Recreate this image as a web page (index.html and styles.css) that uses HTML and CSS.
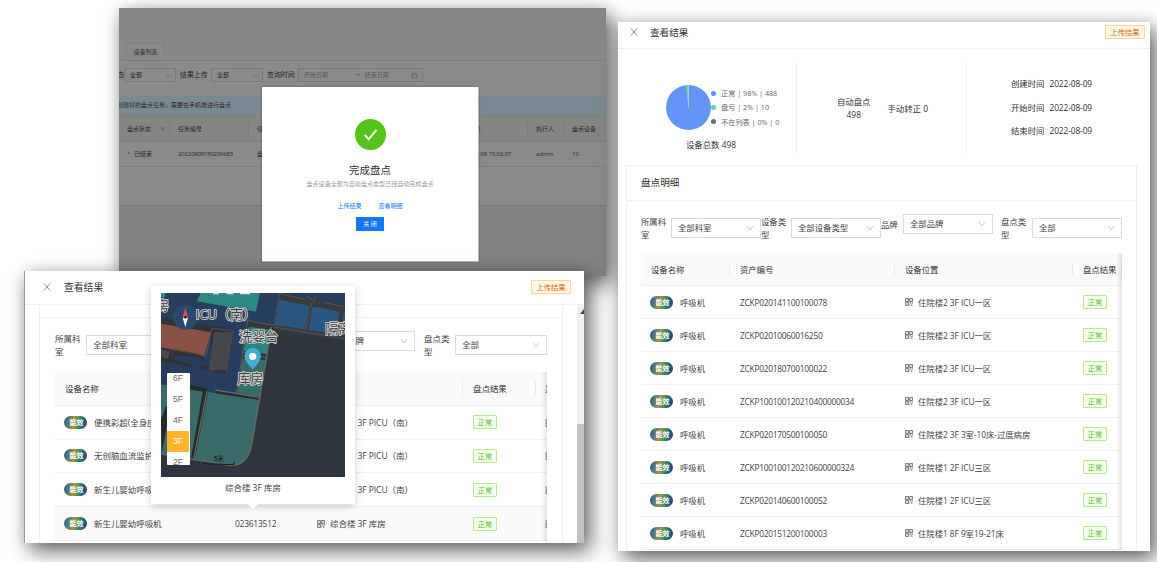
FILE: index.html
```html
<!DOCTYPE html>
<html lang="zh-CN">
<head>
<meta charset="utf-8">
<title>盘点结果</title>
<link rel="stylesheet" href="styles.css">
</head>
<body>
<svg class="defs" width="0" height="0">
  <symbol id="close" viewBox="0 0 8 8"><path d="M.8.4 7.2 7.6M7.2.4.8 7.6" fill="none" stroke="#777" stroke-width=".8"/></symbol>
  <symbol id="down" viewBox="0 0 8 8"><path d="M1 2 4 6 7 2" fill="none" stroke="currentColor" stroke-width=".8"/></symbol>
  <symbol id="qr" viewBox="0 0 8 8"><path d="M.5.5h3v3h-3zM4.6.5h2.9v3H4.6zM.5 4.6h3v2.9h-3zM1.5 2h1M5.5 2h1M1.5 6h1M4.5 4.7h1.3v1.2M7.4 4.4v1.4M4.6 7.4V6.5M6.2 7.4h1.3M6 6.3h.8" fill="none" stroke="#555" stroke-width=".75"/></symbol>
</svg>
<main class="canvas">

<section class="window tasks">
  <div class="tabs"><div class="tab">设备列表</div></div>
  <div class="query">
    <span class="cut">态</span>
    <div class="pick">全部<svg><use href="#down"/></svg></div>
    <span class="q-label">结果上传</span>
    <div class="pick">全部<svg><use href="#down"/></svg></div>
    <span class="q-label">查询时间</span>
    <div class="range"><span>开始日期</span><i>→</i><span>结束日期</span>
      <svg viewBox="0 0 8 8"><path d="M1 1.8h6v5H1zM1 3.6h6M2.6.8v1.6M5.4.8v1.6" fill="none" stroke="currentColor" stroke-width=".7"/></svg></div>
  </div>
  <div class="notice"><span>创建好的盘点任务，需要在手机端进行盘点</span></div>
  <div class="t-row t-head">
    <span class="status">盘点状态 <svg viewBox="0 0 6 6"><path d="M.5.7h5L3.7 3v2.4H2.3V3z" fill="#666"/></svg></span>
    <span>任务编号</span><span>任务名称</span><span class="end">时间</span><span>执行人</span><span>盘点设备</span>
  </div>
  <div class="t-row t-body">
    <span><i class="dot"></i>已结束</span><span class="num">20220809150236683</span><span>盘点任务</span><span class="end time">2022-08-09 15:02:37</span><span>admin</span><span>10</span>
  </div>
  <div class="t-pad"></div>
  <div class="dialog">
    <svg class="ok" viewBox="0 0 31 31"><circle cx="15.5" cy="15.5" r="15.5" fill="#52c41a"/><path d="M9.7 15.8 13.7 20.2 21.5 10.8" fill="none" stroke="#fff" stroke-width="2"/></svg>
    <h3>完成盘点</h3>
    <p>盘点设备全部为自动盘点类型已经自动完成盘点</p>
    <div class="links"><a>上传结果</a><a>查看明细</a></div>
    <button>关 闭</button>
  </div>
</section>

<section class="window result">
  <header class="head"><svg class="x"><use href="#close"/></svg><h2>查看结果</h2><span class="upload">上传结果</span></header>
  <div class="stats">
    <div class="chart">
      <div class="chart-row">
        <svg class="pie" viewBox="0 0 45 45"><circle cx="22.5" cy="22.5" r="22.5" fill="#6395f9"/><path d="M22.5 22.5 19.7.2A22.5 22.5 0 0 1 22.5 0z" fill="#62daab"/><path d="M22.5 22.5V0" stroke="#dbe7fb" stroke-width=".5"/></svg>
        <ul class="legend"><li class="c1">正常 | 98% | 488</li><li class="c2">盘亏 | 2% | 10</li><li class="c3">不在列表 | 0% | 0</li></ul>
      </div>
      <div class="total">设备总数 498</div>
    </div>
    <div class="counts"><div class="auto">自动盘点<br>498</div><div>手动转正 0</div></div>
    <div class="dates">
      <div><span>创建时间</span><b>2022-08-09</b></div>
      <div><span>开始时间</span><b>2022-08-09</b></div>
      <div><span>结束时间</span><b>2022-08-09</b></div>
    </div>
  </div>
  <div class="card">
    <h2 class="card-title">盘点明细</h2>
    <div class="filters">
      <label>所属科室</label><div class="select">全部科室<svg><use href="#down"/></svg></div>
      <label>设备类型</label><div class="select">全部设备类型<svg><use href="#down"/></svg></div>
      <label class="brand">品牌</label><div class="select up">全部品牌<svg><use href="#down"/></svg></div>
      <label class="kind">盘点类型</label><div class="select">全部<svg><use href="#down"/></svg></div>
    </div>
    <div class="table">
      <div class="row th"><span>设备名称</span><span>资产编号</span><span>设备位置</span><span>盘点结果</span></div>
      <div class="row"><span><em class="badge">能效</em>呼吸机</span><span class="code">ZCKP020141100100078</span><span><svg class="qr"><use href="#qr"/></svg>住院楼2 3F ICU一区</span><span><b class="tag">正常</b></span></div>
      <div class="row"><span><em class="badge">能效</em>呼吸机</span><span class="code">ZCKP02010060016250</span><span><svg class="qr"><use href="#qr"/></svg>住院楼2 3F ICU一区</span><span><b class="tag">正常</b></span></div>
      <div class="row"><span><em class="badge">能效</em>呼吸机</span><span class="code">ZCKP020180700100022</span><span><svg class="qr"><use href="#qr"/></svg>住院楼2 3F ICU一区</span><span><b class="tag">正常</b></span></div>
      <div class="row"><span><em class="badge">能效</em>呼吸机</span><span class="code">ZCKP100100120210400000034</span><span><svg class="qr"><use href="#qr"/></svg>住院楼2 3F ICU一区</span><span><b class="tag">正常</b></span></div>
      <div class="row"><span><em class="badge">能效</em>呼吸机</span><span class="code">ZCKP020170500100050</span><span><svg class="qr"><use href="#qr"/></svg>住院楼2 3F 3室-10床-过度病房</span><span><b class="tag">正常</b></span></div>
      <div class="row"><span><em class="badge">能效</em>呼吸机</span><span class="code">ZCKP100100120210600000324</span><span><svg class="qr"><use href="#qr"/></svg>住院楼1 2F ICU三区</span><span><b class="tag">正常</b></span></div>
      <div class="row"><span><em class="badge">能效</em>呼吸机</span><span class="code">ZCKP020140600100052</span><span><svg class="qr"><use href="#qr"/></svg>住院楼1 2F ICU三区</span><span><b class="tag">正常</b></span></div>
      <div class="row"><span><em class="badge">能效</em>呼吸机</span><span class="code">ZCKP020151200100003</span><span><svg class="qr"><use href="#qr"/></svg>住院楼1 8F 9室19-21床</span><span><b class="tag">正常</b></span></div>
    </div>
  </div>
</section>

<section class="window locate">
  <header class="head"><svg class="x"><use href="#close"/></svg><h2>查看结果</h2><span class="upload">上传结果</span></header>
  <div class="scroller">
    <div class="card">
      <div class="card-title"></div>
      <div class="filters">
        <label>所属科室</label><div class="select">全部科室<svg><use href="#down"/></svg></div>
        <label>设备类型</label><div class="select">全部设备类型<svg><use href="#down"/></svg></div>
        <label class="brand">品牌</label><div class="select up">全部品牌<svg><use href="#down"/></svg></div>
        <label class="kind">盘点类型</label><div class="select">全部<svg><use href="#down"/></svg></div>
      </div>
      <div class="table">
        <div class="row th"><span>设备名称</span><span>资产编号</span><span>设备位置</span><span>盘点结果</span><span>是</span></div>
        <div class="row"><span><em class="badge">能效</em>便携彩超(全身应用)</span><span class="code">023613509</span><span><svg class="qr"><use href="#qr"/></svg>综合楼 3F PICU（南）</span><span><b class="tag">正常</b></span><span>图</span></div>
        <div class="row"><span><em class="badge">能效</em>无创脑血流监护仪</span><span class="code">023613510</span><span><svg class="qr"><use href="#qr"/></svg>综合楼 3F PICU（南）</span><span><b class="tag">正常</b></span><span>图</span></div>
        <div class="row"><span><em class="badge">能效</em>新生儿婴幼呼吸机</span><span class="code">023613511</span><span><svg class="qr"><use href="#qr"/></svg>综合楼 3F PICU（南）</span><span><b class="tag">正常</b></span><span>图</span></div>
        <div class="row active"><span><em class="badge">能效</em>新生儿婴幼呼吸机</span><span class="code">023613512</span><span><svg class="qr"><use href="#qr"/></svg>综合楼 3F 库房</span><span><b class="tag">正常</b></span><span>图</span></div>
      </div>
    </div>
    <div class="bar"><svg viewBox="0 0 7 8"><path d="M3 6 7 1V6z" fill="#444"/></svg><i></i></div>
  </div>
  <div class="pop">
    <div class="map">
      <svg viewBox="33 40 552 552" width="184" height="184">
        <rect x="33" y="40" width="552" height="552" fill="#263d5d"/>
        <path d="M365 140 585 175V592H33V520L240 555 300 520Z" fill="#2f353e"/>
        <path d="M33 40h14l-4 16-10-3zM152 40 140 65 318 96 330 40Z" fill="#2d8983"/>
        <path d="M189 40h18M230 40h20M270 40h30" stroke="#dfe6e6" stroke-width="8"/>
        <path d="M33 114 250 149V160L232 283 208 279 170 272 152 268 154 256 180 260 184 158 33 132Z" fill="#303235"/>
        <path d="M33 132 183 158 160 237 33 206Z" fill="#8b5145"/>
        <path d="M192 158 247 157 229 270 176 273Z" fill="#47484b"/>
        <path d="M186 146 166 238M249 153 229 280M186 146 249 153" stroke="#505154" stroke-width="3" fill="none"/>
        <path d="M33 203 137 221 165 232 162 240 125 232 75 225 68 240 125 255 120 263 60 248 33 246Z" fill="#303235"/>
        <path d="M33 210 60 215 54 237 33 232Z" fill="#4a4b4e"/>
        <path d="M33 203 72 211 65 235M72 211 140 223" stroke="#505154" stroke-width="2" fill="none"/>
        <path d="M387 40 585 78V184L370 150Z" fill="#393a3c"/>
        <path d="M388 60 478 78 466 149 374 137ZM488 80 568 96 556 162 475 151ZM580 100h5v62h-10z" fill="#2b5681"/>
        <path d="M388 42 465 59M468 50 488 60M496 48 491 68M518 67 585 82M372 139 388 44M468 151 485 70M372 142 585 177" stroke="#525254" stroke-width="3" fill="none"/>
        <path d="M291 122 370 137 312 500 300 500 325 360 257 342Z" fill="#343739"/>
        <path d="M297 142 362 150 350 223 280 214Z" fill="#2a847f"/>
        <path d="M277 237 350 241 328 352 262 340Z" fill="#376b67"/>
        <path d="M291 122 370 137M293 124 259 340M275 217 350 234" stroke="#57595a" stroke-width="3" fill="none"/>
        <path d="M172 336 328 360 304 495Q294 562 234 557L130 540Z" fill="#3b6b68"/>
        <path d="M33 314 162 334 126 538 33 522Z" fill="#3b6b68"/>
        <path d="M48 380 62 382 35 520 33 420Z" fill="#232829"/>
        <path d="M160 328 174 338 134 540 123 536ZM198 331 329 352V361L196 340ZM120 317 172 326 170 337 120 330Z" fill="#282b2c"/>
        <path d="M365 142 307 485Q296 562 236 557L33 523M171 335 131 539M196 331 329 353" stroke="#646767" stroke-width="4" fill="none"/>
        <path d="M163 547v5l89 3v-8" stroke="#151a1a" stroke-width="3" fill="none"/>
        <circle cx="106" cy="113" r="37" fill="#2a496c"/>
        <path d="M106 84 114 112H98Z" fill="#e64b4f"/><path d="M98 114h16l-8 28Z" fill="#fff"/><circle cx="106" cy="113" r="4" fill="#222"/>
        <g class="labels"><text x="18" y="92">房</text><text x="137" y="118">ICU（南）</text><text x="267" y="184">洗婴台</text><text x="262" y="311">库房</text><text x="526" y="159">隔离</text></g>
        <path d="M308 270Q283 243 283 230A25 25 0 0 1 333 230Q333 243 308 270Z" fill="#43adcf"/><circle cx="308" cy="230" r="11" fill="#fff"/>
        <text class="scale" x="191" y="544">5米</text>
      </svg>
      <div class="floors"><span>6F</span><span>5F</span><span>4F</span><span class="on">3F</span><span>2F</span></div>
    </div>
    <div class="caption">综合楼 3F 库房</div>
  </div>
</section>
</main>
</body>
</html>
```
FILE: styles.css
```css
* { box-sizing: border-box; margin: 0; padding: 0; }
body { width: 1157px; height: 562px; overflow: hidden; background: #fff; font-family: "Open Sans", "Noto Sans CJK SC", sans-serif; color: #444; }
i, em { font-style: normal; }
.defs { position: absolute; }
.canvas { position: relative; width: 1157px; height: 562px; overflow: hidden; }
.window { position: absolute; background: #fff; box-shadow: 6px 8px 20px rgba(0,0,0,.6), 0 0 14px rgba(0,0,0,.1); }

/* Task list behind its mask */
.tasks { left: 119px; top: 8px; width: 487px; height: 268px; background: #838383; font-size: 6px; line-height: 8px; color: #2b2b2b; }
.tabs { height: 53px; padding: 35px 0 0 7px; background: #868786; border-bottom: 1px solid #7c7c7c; }
.tab { width: 39px; height: 17px; background: #898989; border: 1px solid #7f7f7f; border-bottom: 0; text-align: center; line-height: 17px; }
.query { height: 35px; padding: 7px 0 0; display: flex; align-items: flex-start; background: #8a8a8a; line-height: 14px; }
.cut { width: 5px; height: 14px; font-size: 7px; direction: rtl; overflow: hidden; }
.pick { width: 52px; height: 14px; border: 1px solid #7a7a7a; padding: 0 4px 0 5px; display: flex; justify-content: space-between; align-items: center; line-height: 12px; }
.pick svg { width: 5px; height: 5px; color: #5c5c5c; }
.q-label { width: 35px; font-size: 6.9px; padding-left: 4px; }
.range { width: 125px; height: 14px; border: 1px solid #7a7a7a; padding: 0 4px 0 5px; display: flex; justify-content: space-between; align-items: center; color: #5c5c5c; line-height: 12px; }
.range i { padding-left: 22px; margin-right: -23px; }
.range span { padding-left: 0; }
.range span + i + span { margin-left: 23px; }
.range svg { width: 7px; height: 7px; margin-left: 18px; }
.notice { height: 18px; background: #7c8991; border: solid #6c8c9d; border-width: 1px 0; line-height: 16px; overflow: hidden; }
.notice span { display: block; margin-left: -2px; }
.t-row { display: grid; grid-template-columns: 51px 79px 108px 171px 36px 42px; height: 25px; align-items: center; background: #8a8a8a; border-bottom: 1px solid #7f7f7f; }
.t-row span { padding-left: 8px; white-space: nowrap; }
.t-head { height: 24px; margin-top: 4px; background: #858585; }
.t-head span { border-right: 1px solid #7b7b7b; line-height: 13px; }
.t-head span:last-child { border: 0; }
.t-row .end { padding-right: 47px; text-align: right; }
.t-row .time { padding-right: 17px; letter-spacing: -.15px; }
.status { display: flex; justify-content: space-between; align-items: center; }
.status svg { width: 5px; height: 5px; margin-right: 4px; }
.num { letter-spacing: -.2px; }
.dot { display: inline-block; width: 2px; height: 2px; border-radius: 50%; background: #5b5b5b; margin: 0 4px 2px 1px; }
.t-pad { height: 39px; background: #8a8a8a; border-bottom: 1px solid #787878; }
.dialog { position: absolute; left: 143px; top: 79px; width: 217px; height: 175px; padding-top: 32px; background: #fff; border: 1px solid #bbb; border-width: 0 1px 1px 0; box-shadow: 0 0 2px rgba(0,0,0,.35); text-align: center; display: flex; flex-direction: column; align-items: center; }
.ok { width: 31px; height: 31px; }
.dialog h3 { margin-top: 12px; font-size: 10.5px; line-height: 16px; font-weight: 400; color: #333; }
.dialog p { color: #999; line-height: 10px; margin-top: 1px; font-size: 6.06px; }
.links { display: flex; gap: 17px; margin-top: 13px; line-height: 9px; color: #1677ff; }
.dialog button { width: 28px; height: 14px; margin-top: 6px; border: 0; background: #1677ff; color: #fff; font: inherit; line-height: 14px; }

/* Shared drawer parts */
.head { display: flex; align-items: center; border-bottom: 1px solid #efefef; }
.x { width: 8px; height: 8px; }
.head h2, .card-title { font-size: 9.6px; font-weight: 400; color: #333; }
.upload { margin-left: auto; border: 1px solid #ffd591; background: #fff7e6; color: #d46b08; border-radius: 1px; font-size: 7.3px; line-height: 12px; height: 14px; width: 40px; text-align: center; }
.card { border: 1px solid #f0f0f0; border-bottom: 0; }
.filters { display: flex; align-items: flex-start; }
.filters label { width: 30px; padding-right: 4px; line-height: 13px; }
.select { width: 90px; height: 20px; margin-top: 3px; border: 1px solid #dcdcdc; background: #fff; padding: 0 6px; display: flex; align-items: center; justify-content: space-between; line-height: 18px; white-space: nowrap; }
.select svg { width: 8px; height: 8px; color: #bdbdbd; }
.select.up { margin-top: -1px; }
.filters .brand { width: 22px; padding: 3px 0 0; white-space: nowrap; }
.filters .kind { width: 39px; padding-left: 8px; }
.table { position: relative; overflow: hidden; }
.table::after { content: ""; position: absolute; right: 0; top: 0; bottom: 0; width: 6px; background: linear-gradient(to right, rgba(0,0,0,0), rgba(0,0,0,.1)); }
.row { display: grid; align-items: center; border-bottom: 1px solid #efefef; white-space: nowrap; }
.row > span { padding-left: 10px; display: flex; align-items: center; letter-spacing: -.06px; }
.row > .code { letter-spacing: -.27px; }
.th { background: #fafafa; color: #333; }
.th > span { height: 14px; border-right: 1px solid #ececec; }
.badge { width: 23px; height: 13px; margin: 0 7px 0 -1px; border-radius: 7px; background: linear-gradient(100deg, #2c6485 5%, #5f8170 25%, #b28f43 43%, #3e9860 60%, #246b6b 76%, #273b84 100%); color: #fff; font-size: 7px; font-weight: 700; line-height: 13px; text-align: center; padding-left: 2px; }
.qr { width: 8px; height: 8px; margin-right: 5px; flex: none; }
.tag { width: 24px; height: 14px; border: 1px solid #b7eb8f; border-radius: 1px; background: #f6ffed; color: #52c41a; font-size: 7.2px; line-height: 12px; text-align: center; font-weight: 400; }

/* Result drawer */
.result { left: 618px; top: 22px; width: 532px; height: 529px; overflow: hidden; font-size: 8.4px; line-height: 13px; }
.result .head { height: 27px; padding: 0 5px 6px 12px; }
.result .head h2 { margin-left: 12px; }
.stats { height: 90px; margin-top: 14px; display: grid; grid-template-columns: 179px 170px 1fr; }
.chart { border-right: 1px solid #efefef; padding: 22px 0 0 48px; }
.chart-row { display: flex; align-items: center; gap: 0; height: 45px; }
.pie { width: 45px; height: 45px; }
.legend { list-style: none; font-size: 7.2px; line-height: 14.4px; color: #666; white-space: nowrap; }
.legend li { display: flex; align-items: center; gap: 5px; }
.legend li::before { content: ""; width: 5px; height: 5px; border-radius: 50%; background: #5b8ff9; }
.legend .c2::before { background: #5ad8a6; }
.legend .c3::before { background: #5d7092; }
.total { margin: 8px 0 0 20px; color: #333; }
.counts { border-right: 1px solid #efefef; display: flex; align-items: center; gap: 17px; padding-left: 40px; color: #333; }
.auto { text-align: center; }
.dates { padding: 9px 0 0 44px; color: #333; line-height: 23.5px; }
.dates div { display: flex; gap: 5px; }
.dates b { font-weight: 400; letter-spacing: -.12px; }
.result .card { margin: 12px 13px 0 8px; height: 400px; padding: 0 14px; }
.result .card-title { height: 35px; line-height: 34px; margin: 0 -14px; padding-left: 14px; border-bottom: 1px solid #f0f0f0; }
.result .filters { margin-top: 14px; height: 38px; }
.result .row { grid-template-columns: 89px 165px 178px 49px; height: 33px; }

/* Drawer with the location popover */
.locate { left: 24px; top: 271px; width: 560px; height: 272px; font-size: 8.5px; line-height: 13px; border-left: 1px solid #999; }
.locate .head { height: 34px; padding: 0 13px 1px 18px; }
.locate .head h2 { margin-left: 13px; font-size: 9.8px; }
.scroller { height: 238px; display: flex; justify-content: space-between; overflow: hidden; }
.locate .card { width: 524px; margin-left: 14px; height: 238px; padding: 0 15px; border-top: 0; }
.locate .card-title { height: 13px; margin: 0 -15px; border-bottom: 1px solid #f0f0f0; }
.locate .filters { margin-top: 14px; height: 40px; }
.locate .filters label { width: 31px; }
.locate .filters .brand { width: 22px; }
.locate .filters .kind { width: 40px; padding-left: 9px; }
.locate .select { width: 92px; }
.locate .table { width: 492px; }
.locate .row { grid-template-columns: 170px 82px 156px 73px 30px; height: 33.8px; }
.locate .row > span:last-child { padding-left: 9px; color: #555; }
.locate .active { background: #fafafa; }
.bar { width: 7px; background: #f1f1f1; display: flex; flex-direction: column; }
.bar svg { width: 7px; height: 8px; margin-top: 3px; }
.bar i { display: block; margin-top: 108px; flex: 1; background: #c1c1c1; }
.pop { position: absolute; left: 126px; top: 15px; width: 204px; height: 218px; padding: 7px 10px; background: #fff; box-shadow: 0 2px 8px rgba(0,0,0,.2); }
.pop::after { content: ""; position: absolute; left: 97px; top: 218px; border: 5px solid transparent; border-top-color: #fff; border-bottom: 0; }
.map { position: relative; height: 184px; overflow: hidden; }
.map svg { display: block; }
.labels { font: 39px "Open Sans", "Noto Sans CJK SC", sans-serif; fill: #3d3d3d; stroke: #d8d8d8; stroke-width: 5px; paint-order: stroke; }
.scale { font: 20px "Liberation Sans", "Noto Sans CJK SC", sans-serif; fill: #111; }
.floors { position: absolute; left: 6px; top: 80px; width: 23px; height: 92px; overflow: hidden; background: #fff; border-radius: 1px; font: 8.5px/21px "Liberation Sans", sans-serif; text-align: center; color: #666; }
.floors span { display: block; height: 21px; padding-right: 1px; }
.floors span:first-child { margin-top: -5px; }
.floors .on { width: 22px; background: #ffb52b; color: #fff; padding: 0; }
.caption { margin-top: 4px; text-align: center; }
```
